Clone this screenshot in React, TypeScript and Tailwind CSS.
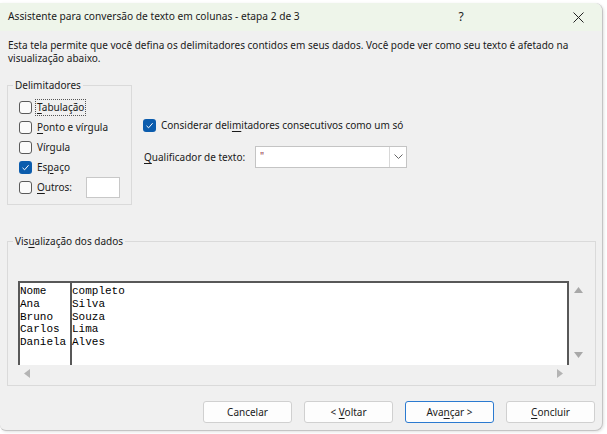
import React from 'react';

const FONT = { fontFamily: '"Segoe UI", "Noto Sans", "Open Sans", sans-serif' };

function Box({ checked }: { checked?: boolean }) {
  if (checked) {
    return (
      <span className="flex h-[13px] w-[13px] flex-shrink-0 items-center justify-center rounded-[3px] bg-[#0b5cad]">
        <svg width="9" height="9" viewBox="0 0 9 9" fill="none">
          <path d="M1.5 4.8 L3.6 6.8 L7.6 2.2" stroke="white" strokeWidth="1" />
        </svg>
      </span>
    );
  }
  return <span className="h-[13px] w-[13px] flex-shrink-0 rounded-[3px] border border-[#5a5a5a] bg-[#fbfbfb]" />;
}

function U({ children }: { children: React.ReactNode }) {
  return <span className="underline underline-offset-2">{children}</span>;
}

function Check({ checked, children, focus }: { checked?: boolean; children: React.ReactNode; focus?: boolean }) {
  return (
    <div className="flex h-[20px] items-center gap-[3px]">
      <Box checked={checked} />
      <span className={focus ? 'border border-dotted border-[#555] px-[1px] leading-[15px]' : 'px-[2px]'}>{children}</span>
    </div>
  );
}

function Group({ label, className, children }: { label: React.ReactNode; className: string; children: React.ReactNode }) {
  return (
    <div className={'relative border border-[#dadada] ' + className}>
      <span className="absolute -top-[8px] left-[5px] bg-[#f0f0f0] px-[2px] leading-[14px]">{label}</span>
      {children}
    </div>
  );
}

function Btn({ children, primary }: { children: React.ReactNode; primary?: boolean }) {
  return (
    <button
      className={
        'h-[22px] w-[89px] rounded-[3px] bg-[#fdfdfd] text-[10px] text-[#1a1a1a] ' +
        (primary ? 'border border-[#2b7ad0]' : 'border border-[#d0d0d0]')
      }
    >
      {children}
    </button>
  );
}

const rows = [
  ['Nome', 'completo'],
  ['Ana', 'Silva'],
  ['Bruno', 'Souza'],
  ['Carlos', 'Lima'],
  ['Daniela', 'Alves'],
];

export default function App() {
  return (
    <div className="h-[434px] w-[607px] overflow-hidden bg-white pt-[3px]" style={FONT}>
      <div className="flex h-[428px] w-[603px] flex-col rounded-r-[8px] rounded-bl-[6px] border-r border-b border-[#c4c4c4] bg-[#f0f0f0] text-[10px] text-[#1a1a1a] shadow-[1px_1px_3px_rgba(0,0,0,0.12)]">
        {/* title bar */}
        <div className="flex h-[28px] flex-shrink-0 items-center rounded-tr-[8px] bg-[#eef5ea] pl-[8px] text-[10.2px]">
          <span className="flex-1">Assistente para conversão de texto em colunas - etapa 2 de 3</span>
          <span className="w-[20px] text-center text-[12px]">?</span>
          <span className="ml-[97px] mr-[14px] flex w-[20px] justify-center">
            <svg width="11" height="11" viewBox="0 0 11 11" stroke="#222" strokeWidth="1">
              <path d="M0.5 0.5 L10.5 10.5 M10.5 0.5 L0.5 10.5" />
            </svg>
          </span>
        </div>

        <p className="mt-[8px] pl-[8px] pr-[16px] leading-[13px]">
          Esta tela permite que você defina os delimitadores contidos em seus dados. Você pode ver como seu texto é afetado na
          <br />
          visualização abaixo.
        </p>

        <div className="mt-[20px] flex">
          {/* delimiters */}
          <Group label="Delimitadores" className="ml-[7px] h-[120px] w-[125px] px-[11px] pt-[11px]">
            <Check focus>
              <U>T</U>abulação
            </Check>
            <Check>
              <U>P</U>onto e vírgula
            </Check>
            <Check>Vírgula</Check>
            <Check checked>
              Es<U>p</U>aço
            </Check>
            <div className="flex h-[20px] items-center gap-[3px]">
              <Box />
              <span className="w-[50px] px-[2px]">
                <U>O</U>utros:
              </span>
              <span className="h-[21px] w-[36px] border border-[#c8c8c8] bg-white" />
            </div>
          </Group>

          <div className="ml-[11px] pt-[33px]">
            <div className="flex h-[14px] items-center gap-[4px]">
              <Box checked />
              <span className="px-[1px]">
                Considerar deli<U>m</U>itadores consecutivos como um só
              </span>
            </div>
            <div className="mt-[14px] flex items-center">
              <span className="w-[112px] pl-[1px]">
                <U>Q</U>ualificador de texto:
              </span>
              <div className="flex h-[22px] w-[152px] border border-[#c4c4c4] bg-white">
                <span className="flex-1 pl-[4px] pt-[2px] text-[#8a2a3a]">"</span>
                <span className="flex w-[17px] items-center justify-center border-l border-[#d8d8d8]">
                  <svg width="9" height="6" viewBox="0 0 9 6" fill="none" stroke="#666">
                    <path d="M0.5 0.5 L4.5 4.5 L8.5 0.5" />
                  </svg>
                </span>
              </div>
            </div>
          </div>
        </div>

        {/* data preview */}
        <Group
          label={
            <>
              Vis<U>u</U>alização dos dados
            </>
          }
          className="mt-[36px] ml-[7px] h-[145px] w-[589px] pl-[10px] pt-[39px]"
        >
          <div className="flex">
            <div
              className="flex h-[84px] w-[551px] border-x-2 border-t-2 border-[#585858] bg-white text-[11px] leading-[12.8px] text-black"
              style={{ fontFamily: '"Liberation Mono", "Courier New", monospace' }}
            >
              <div className="w-[52px] border-r-2 border-[#585858] pt-[2px]">
                {rows.map((r) => (
                  <div key={r[0]}>{r[0]}</div>
                ))}
              </div>
              <div className="pt-[2px]">
                {rows.map((r) => (
                  <div key={r[1]}>{r[1]}</div>
                ))}
              </div>
            </div>
            <div className="flex w-[18px] flex-col items-center justify-between pt-[6px] pb-[7px]">
              <svg width="9" height="6" viewBox="0 0 9 6"><path d="M0 6 L4.5 0 L9 6 Z" fill="#a8a8a8" /></svg>
              <svg width="9" height="6" viewBox="0 0 9 6"><path d="M0 0 L4.5 6 L9 0 Z" fill="#a8a8a8" /></svg>
            </div>
          </div>
          <div className="flex w-[551px] items-center justify-between pl-[6px] pr-[6px] pt-[4px]">
            <svg width="6" height="9" viewBox="0 0 6 9"><path d="M6 0 L0 4.5 L6 9 Z" fill="#b4b4b4" /></svg>
            <svg width="6" height="9" viewBox="0 0 6 9"><path d="M0 0 L6 4.5 L0 9 Z" fill="#b4b4b4" /></svg>
          </div>
        </Group>

        <div className="mt-[15px] flex justify-end gap-[12px] pr-[7px]">
          <Btn>Cancelar</Btn>
          <Btn>
            &lt; <U>V</U>oltar
          </Btn>
          <Btn primary>
            Ava<U>n</U>çar &gt;
          </Btn>
          <Btn>
            <U>C</U>oncluir
          </Btn>
        </div>
      </div>
    </div>
  );
}
